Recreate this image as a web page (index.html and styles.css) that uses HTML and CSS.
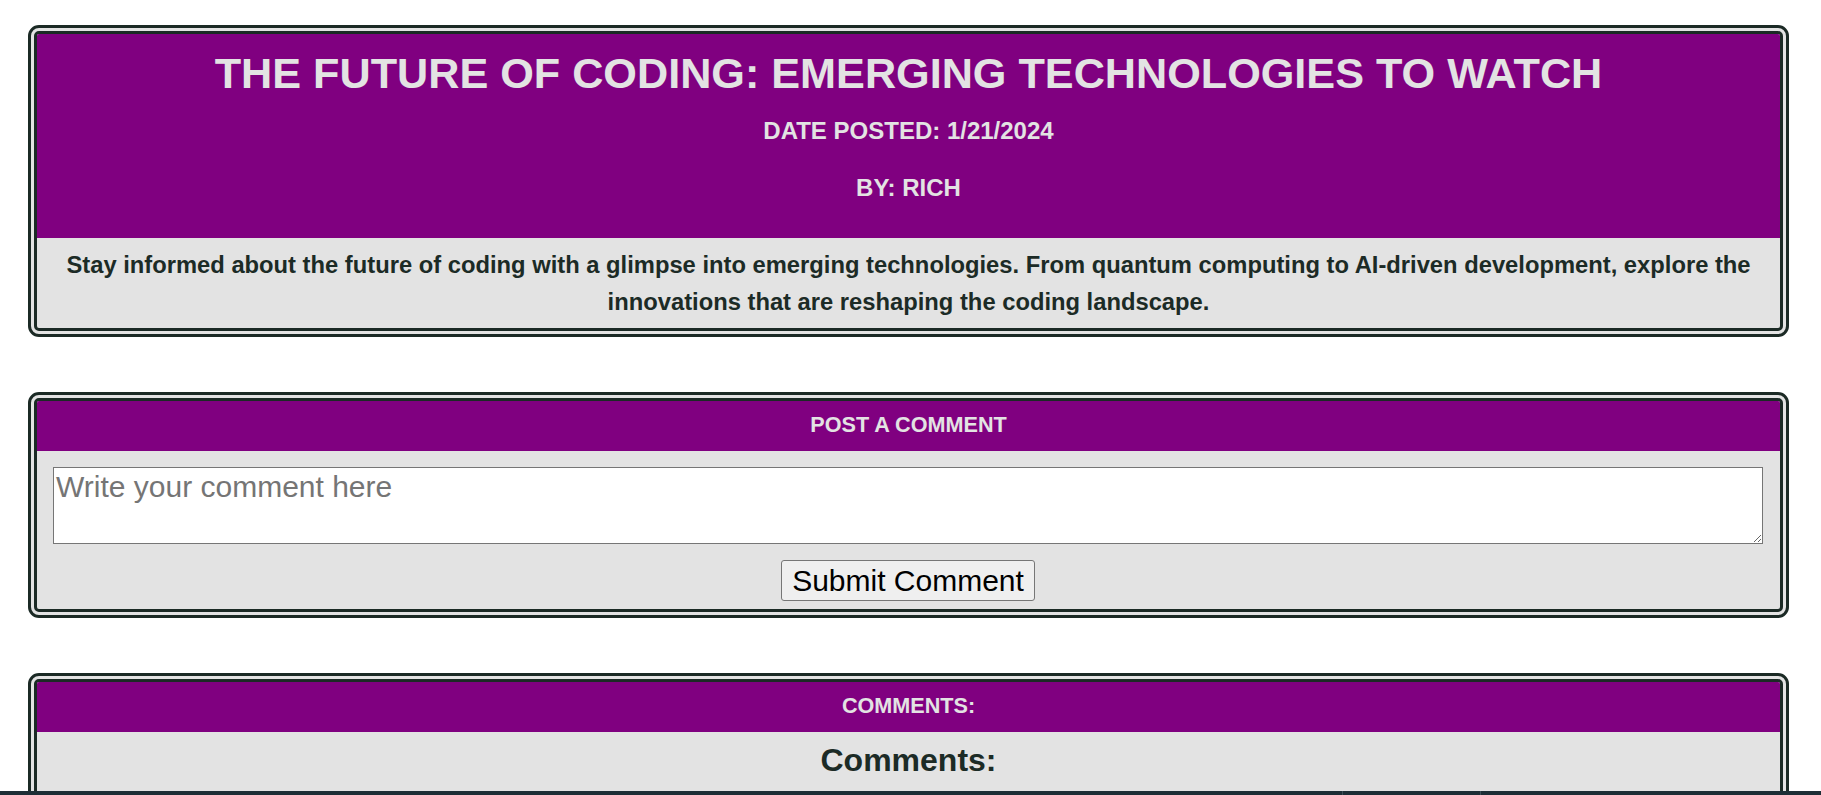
FILE: index.html
```html
<!DOCTYPE html>
<html lang="en">
<head>
<meta charset="utf-8">
<title>The Future of Coding</title>
<link rel="stylesheet" href="styles.css">
</head>
<body>
<main class="page">
  <article class="card">
    <header class="card-head post-head">
      <h1 class="post-title">THE FUTURE OF CODING: EMERGING TECHNOLOGIES TO WATCH</h1>
      <h3 class="meta meta-date">DATE POSTED: 1/21/2024</h3>
      <h3 class="meta meta-by">BY: RICH</h3>
    </header>
    <div class="card-body summary-body">
      <p class="summary">Stay informed about the future of coding with a glimpse into emerging technologies. From quantum computing to AI-driven development, explore the innovations that are reshaping the coding landscape.</p>
    </div>
  </article>

  <section class="card">
    <h2 class="card-head section-title">POST A COMMENT</h2>
    <form class="card-body comment-form">
      <textarea class="comment-input" placeholder="Write your comment here"></textarea>
      <button type="button" class="submit-btn">Submit Comment</button>
    </form>
  </section>

  <section class="card">
    <h2 class="card-head section-title">COMMENTS:</h2>
    <div class="card-body comments-body">
      <h2 class="comments-heading">Comments:</h2>
    </div>
  </section>
</main>
<div class="taskbar"><span class="tb-sep tb-sep-a"></span><span class="tb-sep tb-sep-b"></span></div>
</body>
</html>
```

FILE: styles.css
```css
html, body {
  margin: 0;
  padding: 0;
  background: #ffffff;
}

body {
  font-family: "Liberation Sans", Arial, sans-serif;
  color: #1c2b26;
}

.page {
  display: flex;
  flex-direction: column;
  gap: 55px;
  padding: 25px 32px 40px 28px;
}

.card {
  border: 9px double #1b2a25;
  border-radius: 11px;
  background: #e3e3e3;
  overflow: hidden;
}

.card-head {
  background: #800080;
  color: #e3e3e3;
  text-align: center;
  margin: 0;
}

.post-head {
  padding: 15px 10px 37px;
}

.post-title {
  margin: 0;
  font-size: 43.2px;
  font-weight: bold;
  line-height: 49px;
}

.meta {
  margin: 0;
  font-size: 24px;
  font-weight: bold;
  line-height: 27px;
}

.meta-date {
  margin-top: 19px;
}

.meta-by {
  margin-top: 30px;
}

.summary-body {
  padding: 8px 20px 8px;
}

.summary {
  margin: 0;
  text-align: center;
  font-size: 23.75px;
  font-weight: bold;
  line-height: 37px;
  color: #1c2b26;
}

.section-title {
  font-size: 21.6px;
  font-weight: bold;
  line-height: 24px;
  padding: 12px 10px 14px;
}

.comment-form {
  display: flex;
  flex-direction: column;
  align-items: center;
  gap: 16px;
  padding: 16px 17px 8px 16px;
  margin: 0;
}

.comment-input {
  align-self: stretch;
  box-sizing: border-box;
  height: 77px;
  margin: 0;
  padding: 2px;
  border: 1px solid #767676;
  background: #ffffff;
  font-family: "Liberation Sans", Arial, sans-serif;
  font-size: 30px;
  color: #000;
}

.comment-input::placeholder {
  color: #757575;
}

.submit-btn {
  font-family: "Liberation Sans", Arial, sans-serif;
  font-size: 30px;
  color: #000;
  background: #efefef;
  border: 1px solid #767676;
  border-radius: 3px;
  padding: 2px 10px;
  line-height: 35px;
}

.comments-body {
  padding: 10px 20px 20px;
}

.comments-heading {
  margin: 0;
  text-align: center;
  font-size: 32px;
  font-weight: bold;
  line-height: 37px;
  color: #1c2b26;
}

.taskbar {
  position: fixed;
  left: 0;
  right: 0;
  bottom: 0;
  height: 4px;
  background: #1d2e36;
}

.tb-sep {
  position: absolute;
  top: 0;
  bottom: 0;
  width: 1px;
  background: #3d4f58;
}

.tb-sep-a { left: 1342px; }
.tb-sep-b { left: 1480px; }
```
